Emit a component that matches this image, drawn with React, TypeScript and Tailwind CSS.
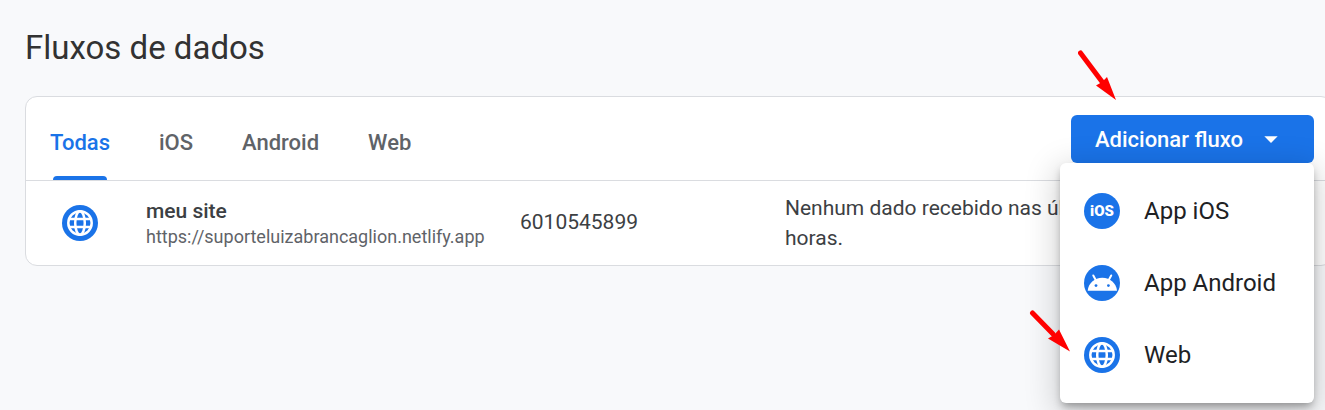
import { useState } from "react";
import { MdArrowDropDown } from "react-icons/md";

interface Stream {
  name: string;
  url: string;
  id: string;
  status: string;
}

const tabs = ["Todas", "iOS", "Android", "Web"];

const streams: Stream[] = [
  {
    name: "meu site",
    url: "https://suporteluizabrancaglion.netlify.app",
    id: "6010545899",
    status: "Nenhum dado recebido nas últimas 48 horas.",
  },
];

function WebIcon() {
  return (
    <svg viewBox="0 0 36 36" className="size-9 shrink-0" aria-hidden="true">
      <circle cx="18" cy="18" r="18" fill="#1a73e8" />
      <g fill="none" stroke="#fff" strokeWidth="2.500">
        <circle cx="18" cy="18" r="11.700" />
        <ellipse cx="18" cy="18" rx="4.800" ry="11.700" />
        <path d="M7 14.100h22M7 21.900h22" />
      </g>
    </svg>
  );
}

function IosIcon() {
  return (
    <span className="flex size-9 shrink-0 items-center justify-center rounded-full bg-[#1a73e8] text-[15px] leading-none font-black text-white">
      iOS
    </span>
  );
}

function AndroidIcon() {
  return (
    <svg viewBox="0 0 36 36" className="size-9 shrink-0" aria-hidden="true">
      <circle cx="18" cy="18" r="18" fill="#1a73e8" />
      <path
        d="M9.300 10.500l2.700 5M27.200 10.500l-2.700 5"
        stroke="#fff"
        strokeWidth="2"
        strokeLinecap="round"
      />
      <path
        d="M3.700 25.800C4.300 18.400 10.400 12.800 18.300 12.800s14 5.600 14.700 13z"
        fill="#fff"
      />
      <circle cx="12" cy="20.600" r="1.400" fill="#1a73e8" />
      <circle cx="24.400" cy="20.600" r="1.400" fill="#1a73e8" />
    </svg>
  );
}

const menuItems = [
  { label: "App iOS", icon: <IosIcon /> },
  { label: "App Android", icon: <AndroidIcon /> },
  { label: "Web", icon: <WebIcon /> },
];

export default function App() {
  const [activeTab, setActiveTab] = useState("Todas");
  const [menuOpen, setMenuOpen] = useState(true);

  return (
    <main className="min-h-screen overflow-hidden bg-[#f8f9fb] pt-7 pb-36 pl-[25px] font-[Roboto,sans-serif] text-[#3c4043]">
      <h1 className="mb-7 text-[33px] leading-10 text-[#323232]">
        Fluxos de dados
      </h1>

      <section className="-mr-2 rounded-xl border border-[#dadce0] bg-white">
        {/* Tabs and add button */}
        <div className="flex items-stretch justify-between border-b border-[#dadce0] pr-[18px]">
          <div role="tablist" className="flex gap-px">
            {tabs.map((tab) => (
              <button
                key={tab}
                role="tab"
                aria-selected={tab === activeTab}
                onClick={() => setActiveTab(tab)}
                className={`relative px-6 pt-2 text-[22px] font-medium ${
                  tab === activeTab ? "text-[#1a73e8]" : "text-[#5f6368]"
                }`}
              >
                {tab}
                {tab === activeTab && (
                  <span className="absolute inset-x-[27px] bottom-0 h-1 rounded-t bg-[#1a73e8]" />
                )}
              </button>
            ))}
          </div>

          <div className="relative mt-[18px] mb-[17px]">
            <button
              aria-expanded={menuOpen}
              onClick={() => setMenuOpen(!menuOpen)}
              className="flex h-12 items-center gap-3 rounded-md bg-[#1a73e8] pr-[27px] pl-6 text-[22px] font-medium text-white"
            >
              Adicionar fluxo
              <MdArrowDropDown size={32} />
            </button>

            {menuOpen && (
              <ul
                role="menu"
                className="absolute top-full right-0 z-10 w-[254px] rounded-md bg-white py-3 shadow-[0_5px_8px_-2px_rgba(0,0,0,0.35),0_8px_32px_4px_rgba(0,0,0,0.18)]"
              >
                {menuItems.map((item) => (
                  <li key={item.label} role="none">
                    <button
                      role="menuitem"
                      className="flex h-[72px] w-full items-center gap-6 px-6 text-2xl text-[#202124]"
                    >
                      {item.icon}
                      {item.label}
                    </button>
                  </li>
                ))}
              </ul>
            )}

            {/* Arrow to the button */}
            <svg
              width="40"
              height="52"
              viewBox="0 0 40 52"
              className="absolute -top-[65px] left-[7px] z-20"
              aria-hidden="true"
            >
              <path
                d="M2.500 3L25 33"
                stroke="#f00"
                strokeWidth="5"
                strokeLinecap="round"
              />
              <path d="M38 50L18 35.500l6-3.500 5-5z" fill="#f00" />
            </svg>

            {/* Arrow to the Web entry */}
            <svg
              width="42"
              height="44"
              viewBox="0 0 42 44"
              className="absolute top-[195px] -left-[42px] z-20"
              aria-hidden="true"
            >
              <path
                d="M3.500 3L24 24"
                stroke="#f00"
                strokeWidth="5"
                strokeLinecap="round"
              />
              <path d="M41 41.500L19 28.500l6-3.500 5-5.500z" fill="#f00" />
            </svg>
          </div>
        </div>

        {/* Stream list */}
        <table className="w-full table-fixed text-left">
          <colgroup>
            <col className="w-[120px]" />
            <col className="w-[374px]" />
            <col className="w-[265px]" />
            <col />
          </colgroup>
          <tbody>
            {streams.map((stream) => (
              <tr key={stream.id} className="h-[84px]">
                <td className="pl-9">
                  <WebIcon />
                </td>
                <td className="pr-6">
                  <div className="text-[21px] leading-7 font-medium">
                    {stream.name}
                  </div>
                  <div className="overflow-hidden text-lg leading-6 whitespace-nowrap text-[#5f6368]">
                    {stream.url}
                  </div>
                </td>
                <td className="text-[21px]">{stream.id}</td>
                <td className="text-[21px] leading-[30px]">
                  <div className="max-w-[380px]">{stream.status}</div>
                </td>
              </tr>
            ))}
          </tbody>
        </table>
      </section>
    </main>
  );
}
